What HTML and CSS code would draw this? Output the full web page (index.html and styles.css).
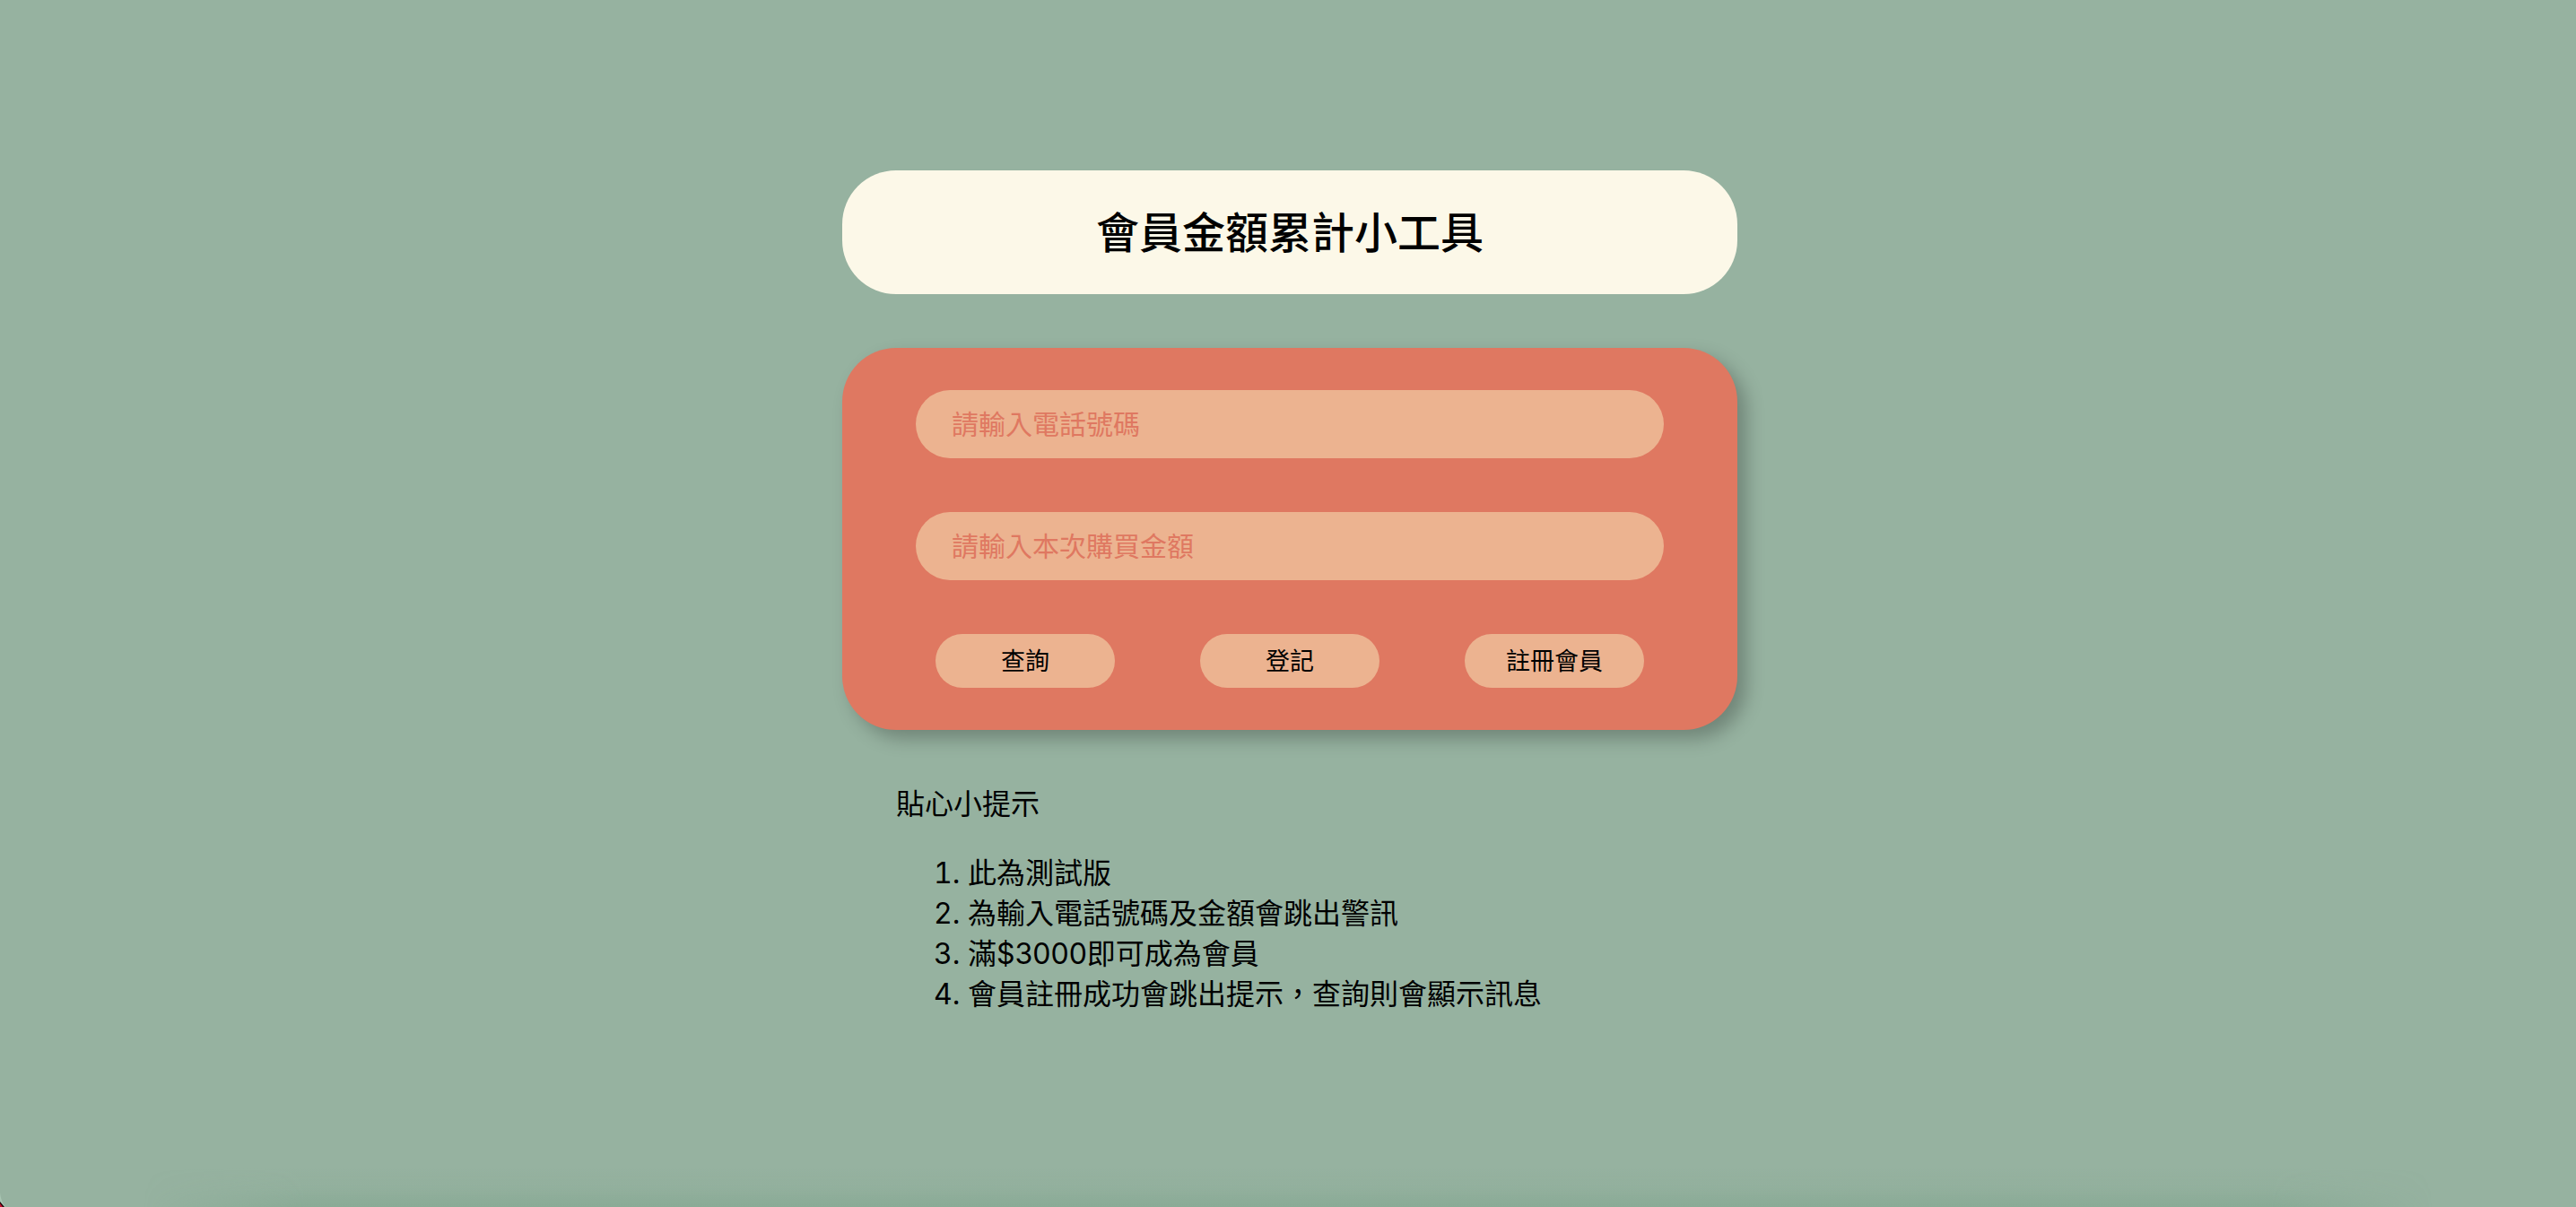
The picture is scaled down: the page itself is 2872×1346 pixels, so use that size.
FILE: index.html
```html
<!DOCTYPE html>
<html lang="zh-Hant">
<head>
  <meta charset="utf-8">
  <meta name="viewport" content="width=device-width, initial-scale=1">
  <title>會員金額累計小工具</title>
  <link rel="stylesheet" href="styles.css">
</head>
<body>
  <main class="page">
    <h1 class="title">會員金額累計小工具</h1>
    <form class="card">
      <input class="field" type="tel" aria-label="電話號碼" placeholder="請輸入電話號碼">
      <input class="field" type="text" inputmode="numeric" aria-label="本次購買金額" placeholder="請輸入本次購買金額">
      <div class="actions">
        <button class="button" type="button">查詢</button>
        <button class="button" type="button">登記</button>
        <button class="button" type="button">註冊會員</button>
      </div>
    </form>
    <section class="tips">
      <h2 class="tips-title">貼心小提示</h2>
      <ol class="tips-list">
        <li>此為測試版</li>
        <li>為輸入電話號碼及金額會跳出警訊</li>
        <li>滿$3000即可成為會員</li>
        <li>會員註冊成功會跳出提示，查詢則會顯示訊息</li>
      </ol>
    </section>
  </main>
  <div class="bottom-shade"></div>
  <svg class="corner" width="8" height="24" viewBox="0 0 8 24" aria-hidden="true">
    <path d="M0 8Q1 18 6 24H4Q0 20 0 15Z" fill="#a9c6b4"/>
    <path d="M0 18L5 24H0Z" fill="#1c0508"/>
    <path d="M0 20L3 24H0Z" fill="#c4122f"/>
  </svg>
</body>
</html>
```
FILE: styles.css
```css
* {
  box-sizing: border-box;
}

body {
  position: relative;
  min-height: 100vh;
  margin: 0;
  background: #96b2a0;
  color: #000;
  font-family: Inter, "Noto Sans CJK TC", sans-serif;
}

.page {
  display: flex;
  flex-direction: column;
  gap: 60px;
  width: 100%;
  max-width: 1002px;
  margin: 0 auto;
  padding: 190px 0 60px 4px;
}

.title {
  margin: 0;
  padding: 34px 40px 32px;
  border-radius: 60px;
  background: #fcf8e8;
  font-size: 48px;
  font-weight: 500;
  line-height: 72px;
  text-align: center;
}

.card {
  display: flex;
  flex-direction: column;
  gap: 60px;
  padding: 47px 82px;
  border-radius: 60px;
  background: #df7861;
  box-shadow: 10px 10px 20px rgba(0, 0, 0, 0.25);
}

.field {
  width: 100%;
  height: 76px;
  padding: 0 40px;
  border: 0;
  border-radius: 40px;
  background: #ecb390;
  color: #000;
  font: inherit;
  font-size: 30px;
}

.field::placeholder {
  color: #df7861;
  opacity: 1;
}

.actions {
  display: flex;
  justify-content: space-between;
  padding: 0 22px;
}

.button {
  width: 200px;
  height: 60px;
  padding: 0 0 4px;
  border: 0;
  border-radius: 30px;
  background: #ecb390;
  color: #000;
  font: inherit;
  font-size: 27px;
}

.tips {
  padding: 0 60px;
  font-size: 32px;
  line-height: 45px;
}

.tips-title {
  margin: 0 0 32px;
  font-size: 32px;
  font-weight: 400;
}

.tips-list {
  margin: 0;
  padding-left: 80px;
}

/* soft shade along the lower edge of the window */
.bottom-shade {
  position: absolute;
  right: 160px;
  bottom: 0;
  left: 160px;
  height: 44px;
  background: linear-gradient(to top, rgba(110, 155, 128, 0.3), rgba(110, 155, 128, 0.08) 50%, transparent);
  -webkit-mask-image: linear-gradient(to right, transparent, #000 180px, #000 calc(100% - 180px), transparent);
  mask-image: linear-gradient(to right, transparent, #000 180px, #000 calc(100% - 180px), transparent);
}

.corner {
  position: absolute;
  bottom: 0;
  left: 0;
}
```
